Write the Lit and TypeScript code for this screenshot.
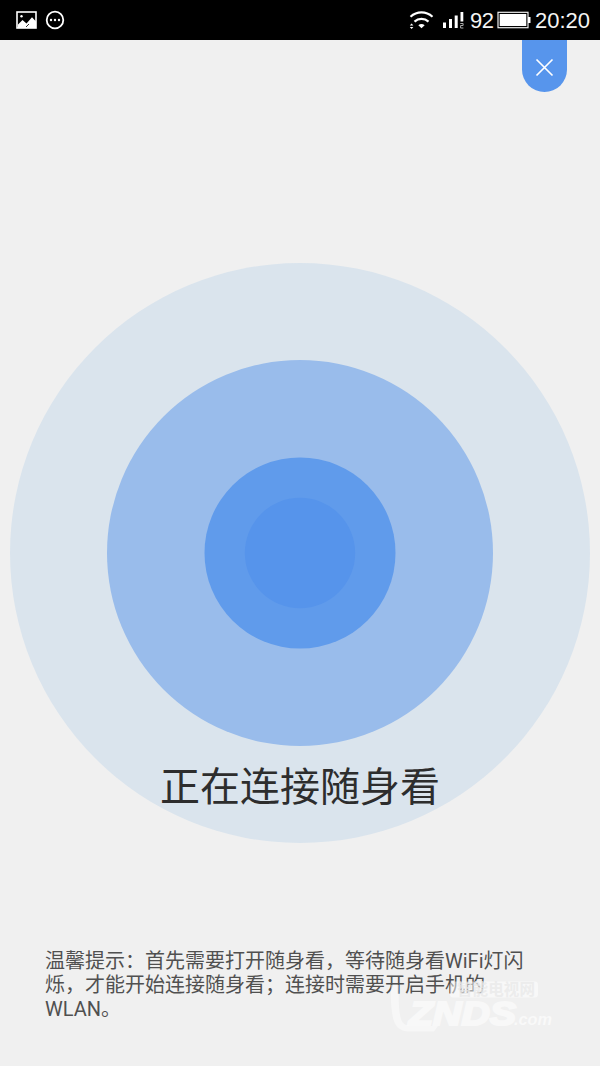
import { LitElement, html, css } from "lit";
import { customElement } from "lit/decorators.js";

@customElement("status-bar")
class StatusBar extends LitElement {
  static styles = css`
    :host {
      display: flex;
      align-items: center;
      height: 40px;
      background: #000;
      color: #f4f4f4;
      font: 22px/40px "Liberation Sans", sans-serif;
    }
    svg {
      display: block;
      flex: none;
    }
    .spacer {
      flex: 1;
    }
    .level {
      width: 26px;
      margin-left: 5px;
      letter-spacing: -0.5px;
      padding-top: 2px;
    }
    .clock {
      width: 65px;
      margin-left: 4px;
      padding-top: 2px;
      white-space: nowrap;
    }
  `;
  render() {
    return html`
      <svg width="90" height="40" viewBox="0 0 90 40">
        <rect x="17" y="12" width="19" height="16" fill="none" stroke="#fff" stroke-width="1.6" />
        <circle cx="21.5" cy="16.3" r="1.2" fill="#fff" />
        <path d="M18 27V24.5L22.5 20L26.5 23.5L32 17.2L36 21.5V28H18Z" fill="#fff" />
        <path d="M26 27L29 24" stroke="#000" stroke-width=".8" />
        <circle cx="55" cy="20" r="8.3" fill="none" stroke="#fff" stroke-width="1.8" />
        <circle cx="51" cy="20" r="1.2" fill="#fff" />
        <circle cx="55" cy="20" r="1.2" fill="#fff" />
        <circle cx="59" cy="20" r="1.2" fill="#fff" />
      </svg>
      <span class="spacer"></span>
      <svg width="56" height="40" viewBox="409 0 56 40">
        <g fill="none" stroke="#fff" stroke-width="2.2">
          <path d="M410.5 16.8C417 11 426 11 432.5 16.8" />
          <path d="M414.5 21.6C418.5 18 424.5 18 428.5 21.6" />
        </g>
        <path d="M418.3 25.2Q421.5 22.8 424.7 25.2L421.5 28.3Z" fill="#fff" />
        <path d="M409.8 25.5L411.6 23.6L413.4 25.5ZM409.8 27L411.6 28.9L413.4 27Z" fill="#fff" />
        <path d="M443 22.5h3V28h-3ZM449 19h3v9h-3ZM454.7 15.5h3V28h-3ZM460.5 12h2.8v9.5h-2.8Z" fill="#fff" />
        <path d="M460.3 23.5h2.8v2h-2.5v2.5h2.8" fill="none" stroke="#aaa" stroke-width="1" />
      </svg>
      <span class="level">92</span>
      <svg width="35" height="40" viewBox="496 0 35 40">
        <rect x="498" y="12.3" width="30" height="15.4" fill="none" stroke="#eee" stroke-width="1.2" />
        <rect x="499.7" y="14" width="26.6" height="12" fill="#fff" />
        <path d="M528 17h2.5v6H528Z" fill="#fff" />
      </svg>
      <span class="clock">20:20</span>
    `;
  }
}

@customElement("site-mark")
class SiteMark extends LitElement {
  static styles = css`
    :host {
      display: block;
    }
    svg {
      display: block;
    }
    .cn {
      font: 700 15.5px "Noto Sans CJK SC", sans-serif;
    }
    .name {
      font: italic 900 34px "Liberation Sans", sans-serif;
    }
    .com {
      font: italic 700 16px "Liberation Sans", sans-serif;
    }
  `;
  render() {
    return html`
      <svg width="170" height="60" viewBox="385 978 170 60">
        <path
          d="M391 985H399Q398 1010 401 1019Q403 1026 411 1026H438L434 1031.5H408Q396 1031 393 1018Q390 1004 391 985Z"
          fill="#fff" opacity=".45" />
        <rect x="450" y="981.5" width="88" height="16" rx="3" fill="#fff" opacity=".5" />
        <text class="cn" x="457" y="995" textLength="78" fill="#e8e8e8" opacity=".75">智能电视网</text>
        <text class="name" x="409" y="1025" textLength="107" lengthAdjust="spacingAndGlyphs"
          fill="#fff" stroke="#fff" stroke-width="2.2" opacity=".55">ZNDS</text>
        <text class="com" x="514" y="1025" textLength="38" lengthAdjust="spacingAndGlyphs"
          fill="#fff" opacity=".6">.com</text>
      </svg>
    `;
  }
}

@customElement("app-root")
class AppRoot extends LitElement {
  static styles = css`
    :host {
      display: flex;
      flex-direction: column;
      position: relative;
      height: 1066px;
      overflow: hidden;
      background: #f0f0f0;
      font-family: Roboto, "Noto Sans CJK SC", sans-serif;
    }
    .top {
      display: flex;
      justify-content: flex-end;
      height: 223px;
      padding-right: 33px;
    }
    .close {
      width: 45px;
      height: 52px;
      padding: 0;
      border: 0;
      border-radius: 0 0 22.5px 22.5px;
      background: #5795ec;
    }
    .close svg {
      display: block;
    }
    .radar {
      display: grid;
      justify-items: center;
      height: 580px;
    }
    .waves,
    .title {
      grid-area: 1 / 1;
    }
    .waves {
      display: block;
    }
    .title {
      margin: 0;
      padding-top: 491px;
      font: 400 40px/60px "Noto Sans CJK SC", sans-serif;
      color: #2d2d2d;
    }
    .tip {
      width: 490px;
      margin: 106px 0 0 45px;
      font-size: 20px;
      line-height: 24px;
      color: #505050;
    }
    .mark {
      position: absolute;
      left: 385px;
      top: 978px;
    }
  `;
  render() {
    return html`
      <status-bar></status-bar>
      <div class="top">
        <button class="close" aria-label="关闭">
          <svg width="45" height="52" viewBox="0 0 45 52">
            <path d="M14.5 19.5L30.5 35.5M30.5 19.5L14.5 35.5" stroke="#fff" stroke-width="1.7" />
          </svg>
        </button>
      </div>
      <section class="radar">
        <svg class="waves" width="580" height="580" viewBox="10 263 580 580">
          <circle cx="300" cy="553" r="290" fill="#dae4ed" />
          <circle cx="300" cy="553" r="193" fill="#99bceb" />
          <circle cx="300" cy="553" r="95.5" fill="#609beb" />
          <circle cx="300" cy="553" r="55.2" fill="#5694eb" />
        </svg>
        <h1 class="title">正在连接随身看</h1>
      </section>
      <p class="tip">温馨提示：首先需要打开随身看，等待随身看WiFi灯闪烁，才能开始连接随身看；连接时需要开启手机的WLAN。</p>
      <site-mark class="mark"></site-mark>
    `;
  }
}
